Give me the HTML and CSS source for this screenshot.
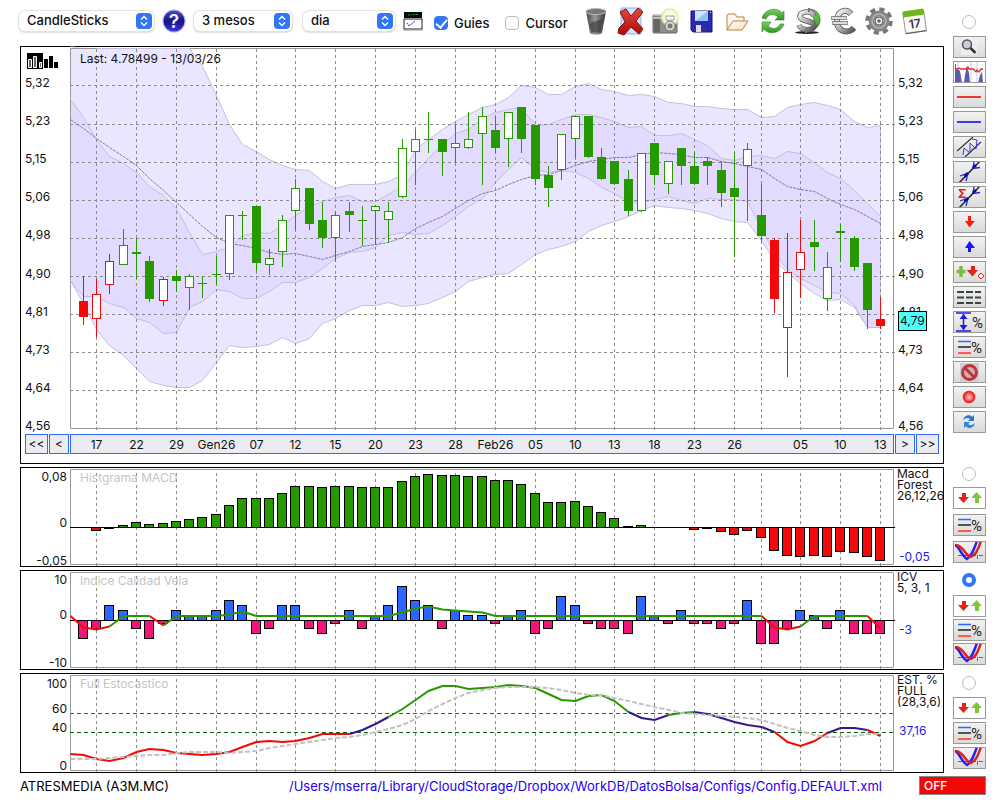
FILE: index.html
```html
<!DOCTYPE html>
<html lang="ca">
<head>
<meta charset="utf-8">
<meta name="viewport" content="width=device-width, initial-scale=1">
<title>ATRESMEDIA (A3M.MC)</title>
<link rel="stylesheet" href="styles.css">
</head>
<body>
<svg class="defs" width="0" height="0" aria-hidden="true">
  <defs>
    <linearGradient id="gMetal" x1="0" x2="1"><stop offset="0" stop-color="#444"/><stop offset=".45" stop-color="#999"/><stop offset="1" stop-color="#333"/></linearGradient>
    <linearGradient id="gSilver" x1="0" x2="1" y1="0" y2="1"><stop offset="0" stop-color="#f6f6f6"/><stop offset=".5" stop-color="#b5b2b2"/><stop offset="1" stop-color="#555"/></linearGradient>
    <linearGradient id="gRed" x1="0" x2="0" y1="0" y2="1"><stop offset="0" stop-color="#e8463c"/><stop offset="1" stop-color="#a80c0c"/></linearGradient>
    <linearGradient id="gGreen" x1="0" x2="0" y1="0" y2="1"><stop offset="0" stop-color="#7ed05c"/><stop offset="1" stop-color="#2f9427"/></linearGradient>
    <linearGradient id="gHelp" x1="0" x2="0" y1="0" y2="1"><stop offset="0" stop-color="#4a4ac4"/><stop offset=".5" stop-color="#15157e"/><stop offset="1" stop-color="#3b32e0"/></linearGradient>
    <linearGradient id="gFolder" x1="0" x2="1" y1="0" y2="1"><stop offset="0" stop-color="#fff"/><stop offset="1" stop-color="#f7dcae"/></linearGradient>
    <radialGradient id="gFlash"><stop offset="0" stop-color="#fff"/><stop offset=".6" stop-color="#fbfbe0"/><stop offset=".8" stop-color="#e9e9a8"/><stop offset="1" stop-color="#f4f4c8" stop-opacity="0"/></radialGradient>
    <radialGradient id="gDot"><stop offset="0" stop-color="#ffd0d0"/><stop offset="1" stop-color="#f22"/></radialGradient>
    <symbol id="i-updown" viewBox="0 0 33 22">
      <path d="M9 6h4v4h3l-5.500 6L5 10h4z" fill="#e3241c"/><path d="M22 16h4v-5h3l-5.500-6L18 11h4z" fill="#7fc43a"/>
    </symbol>
    <symbol id="i-levels" viewBox="0 0 33 22">
      <path d="M5 5.500h13" stroke="#2f63ff" stroke-width="1.500"/><path d="M5 11h13" stroke="#222" stroke-width="1.500"/><path d="M5 17h13" stroke="#ff5a4a" stroke-width="2"/>
      <text class="percent" x="18" y="17">%</text>
    </symbol>
    <symbol id="i-cross" viewBox="0 0 33 22">
      <path d="M5 14.500h27M24.500 14v6" stroke="#3a8a2c" stroke-dasharray="4 3"/>
      <path d="M2 4c4 1 6 10 12 14 5-3 7-10 10-18" fill="none" stroke="#2424f0" stroke-width="2.500"/>
      <path d="M3 4c6 0 9 9 14 12 6-1 8-8 11-16" fill="none" stroke="#e02020" stroke-width="2.500"/>
    </symbol>
    <symbol id="i-trend" viewBox="0 0 33 22">
      <path d="M6 22L27 0" stroke="#222" stroke-width="1.500"/>
      <path d="M7 15l8-3-2 8M21 1l-1 6.500 7-1" fill="none" stroke="#2222e8" stroke-width="1.300"/>
      <path d="M11.500 15.500L15 12M20 7l3-3" stroke="#11118c" stroke-width="2.500"/>
    </symbol>
  </defs>
</svg>

<div class="app">
  <header class="toolbar">
    <div class="selects">
      <span class="pick pick-type"><select aria-label="Tipus de gràfic"><option>CandleSticks</option></select><svg viewBox="0 0 16 16" aria-hidden="true"><path d="M5 6.500L8 3.500l3 3M5 9.500l3 3 3-3"/></svg></span>
      <button class="icon help" type="button" aria-label="Ajuda"><svg viewBox="0 0 24 24"><circle cx="12" cy="12" r="11.500" fill="#b0b0ec"/><circle cx="12" cy="12" r="10.500" fill="url(#gHelp)"/><text x="12" y="19" text-anchor="middle" font-size="19" font-weight="600" fill="#f4f4ff">?</text></svg></button>
      <span class="pick pick-range"><select aria-label="Període"><option>3 mesos</option></select><svg viewBox="0 0 16 16" aria-hidden="true"><path d="M5 6.500L8 3.500l3 3M5 9.500l3 3 3-3"/></svg></span>
      <span class="pick pick-step"><select aria-label="Interval"><option>dia</option></select><svg viewBox="0 0 16 16" aria-hidden="true"><path d="M5 6.500L8 3.500l3 3M5 9.500l3 3 3-3"/></svg></span>
      <button class="icon panels" type="button" aria-label="Panells"><svg viewBox="0 0 20 20"><rect x="1" y="1" width="18" height="6" fill="#0a0a0a"/><path d="M5 4h4M10 3.500h5" stroke="#1f9c1f" stroke-dasharray="2 1"/><rect x="1" y="8" width="18" height="10" fill="#fff" stroke="#222"/><path d="M0 19.500h20" stroke="#ccc"/><path d="M4 12l2 3 6-5" fill="none" stroke="#2a2ae0" stroke-dasharray="2 .5"/></svg></button>
    </div>
    <div class="checks">
      <label><input type="checkbox" checked>Guies</label>
      <label><input type="checkbox">Cursor</label>
    </div>
    <div class="actions">
      <button class="icon" type="button" aria-label="Paperera"><svg viewBox="0 0 28 28"><path d="M4 4l4 22c3 2 9 2 12 0l4-22z" fill="url(#gMetal)"/><ellipse cx="14" cy="4.500" rx="10" ry="3" fill="#777" stroke="#bbb"/><path d="M8 18c2-6 9-2 12-7l-1 13c-3 2-7 2-10 0z" fill="#333" opacity=".6"/></svg></button>
      <button class="icon" type="button" aria-label="Esborra"><svg viewBox="0 0 28 28"><path d="M4 1h20v26H4z" fill="#cfe2fb" stroke="#8fb4ea"/><path d="M3 5l6-3 5 7 7-8 5 4-7 9 7 8-4 5-8-7-7 8-6-2 1-5 6-6z" fill="url(#gRed)" stroke="#8c0d0d"/></svg></button>
      <button class="icon" type="button" aria-label="Captura"><svg viewBox="0 0 28 28"><rect x="1" y="8" width="24" height="18" rx="1" fill="#8d8d85" stroke="#666"/><path d="M2 8h7V6h6v2M1 11h24" stroke="#eee" fill="#aaa"/><rect x="2" y="12" width="6" height="13" fill="#666"/><circle cx="18" cy="10" r="10" fill="url(#gFlash)"/><rect x="14" y="9" width="8" height="4" fill="#fff" stroke="#999"/><circle cx="18" cy="19" r="5" fill="#d8d8cc" stroke="#777"/><circle cx="18" cy="19" r="2.500" fill="#777"/></svg></button>
      <button class="icon" type="button" aria-label="Desa"><svg viewBox="0 0 28 28"><path d="M3 4h21v21H5l-2-2z" fill="#2929b4" stroke="#15157a"/><path d="M7 4h13v10H7z" fill="#cde4f8"/><path d="M20 4l-13 10h13z" fill="#8fc3ee"/><path d="M8 18h11v7H8z" fill="#ddd"/><path d="M13 18h6v7h-6z" fill="#2e2e9a"/><path d="M22 5h1v1h-1z" fill="#fff"/></svg></button>
      <button class="icon" type="button" aria-label="Obre"><svg viewBox="0 0 28 28"><path d="M4 23V8l2-1h6l2 3h7v4" fill="#fff8ea" stroke="#b58345"/><path d="M4 23l6-9h15l-6 9z" fill="url(#gFolder)" stroke="#b58345"/></svg></button>
      <button class="icon" type="button" aria-label="Actualitza"><svg viewBox="0 0 28 28"><path d="M3 11C6 1 19 0 23 6l2-2v9h-9l3-3C15 6 9 7 7 12z" fill="url(#gGreen)" stroke="#37902c" stroke-width=".7"/><path d="M25 17C22 27 9 28 5 22l-2 3v-10h9l-3 4c4 4 10 3 12-2z" fill="url(#gGreen)" stroke="#37902c" stroke-width=".7"/></svg></button>
      <button class="icon" type="button" aria-label="Dòlar"><svg viewBox="0 0 28 28"><ellipse cx="13" cy="25.500" rx="12" ry="1.500" fill="#222"/><path d="M11 4c8-5 16 2 15 10s-9 11-14 9c5-2 8-5 8-9s-3-8-9-10z" fill="url(#gGreen)" stroke="#2a6a26" stroke-width=".7"/><path d="M20 9c-2-6-14-5-14 0 0 6 14 4 14 10 0 5-13 5-15-1" fill="none" stroke="#5a5a5a" stroke-width="5.500"/><path d="M20 9c-2-6-14-5-14 0 0 6 14 4 14 10 0 5-13 5-15-1" fill="none" stroke="url(#gSilver)" stroke-width="4"/><path d="M15 1v4M12 22v4" stroke="#777" stroke-width="2"/></svg></button>
      <button class="icon" type="button" aria-label="Euro"><svg viewBox="0 0 28 28"><path d="M22 7C17 1 8 4 8 14c0 11 11 13 17 7" fill="none" stroke="#555" stroke-width="6"/><path d="M22 7C17 1 8 4 8 14c0 11 11 13 17 7" fill="none" stroke="url(#gSilver)" stroke-width="4.500"/><path d="M2 11h16M3 16h16" stroke="#666" stroke-width="3.500"/><path d="M2.500 11h15M3.500 16h15" stroke="#ddd" stroke-width="2"/></svg></button>
      <button class="icon" type="button" aria-label="Configuració"><svg viewBox="0 0 28 28"><circle cx="14" cy="14" r="11.500" fill="none" stroke="#777" stroke-width="4.500" stroke-dasharray="5 4.030"/><circle cx="14" cy="14" r="7.500" fill="none" stroke="#858585" stroke-width="6"/><circle cx="14" cy="14" r="7" fill="none" stroke="#b4b4b4" stroke-width="1.500"/><circle cx="14" cy="14" r="4" fill="#eee" stroke="#555"/><circle cx="14" cy="14" r="1.800" fill="#666"/></svg></button>
      <button class="icon" type="button" aria-label="Calendari"><svg viewBox="0 0 28 28"><g transform="rotate(-8 14 14)"><rect x="4" y="5" width="21" height="20" fill="#fafafa" stroke="#999"/><path d="M4 3h21v6H4z" fill="#6cb818"/><path d="M4 25.500h21" stroke="#555"/><text x="14.500" y="21" text-anchor="middle" font-size="12" font-weight="600" fill="#333">17</text></g></svg></button>
    </div>
  </header>

  <aside class="tools tools-main">
    <input type="radio" name="panel" aria-label="Panell de preus">
    <button class="tool" type="button" aria-label="Lupa"><svg viewBox="0 0 33 22"><path d="M8 2h16v17H8z" fill="#eee"/><circle cx="14" cy="8.500" r="4.500" fill="#ccd" stroke="#555" stroke-width="1.500"/><path d="M17.500 12l5 5" stroke="#333" stroke-width="2.500"/></svg></button>
    <button class="tool flat" type="button" aria-label="Volum"><svg viewBox="0 0 33 22"><path d="M5 0v22M18 0v22M24 0v22" stroke="#c9c9ee"/><path d="M2 22V3h1v6l2-1 2 2 2 12zM11 22l1-8 2-9 2 7 1 10zM25 22l2-8 2-3 1 11z" fill="#5a5ab0"/><path d="M2 7l2 1 2-1 2 1h5l2-2 1 2h4l3 3 1-2 2 2 2-3h2" fill="none" stroke="#e02828" stroke-width="1.300"/></svg></button>
    <button class="tool" type="button" aria-label="Línia vermella"><svg viewBox="0 0 33 22"><path d="M4 11h24" stroke="#e83a3a" stroke-width="2"/></svg></button>
    <button class="tool" type="button" aria-label="Línia blava"><svg viewBox="0 0 33 22"><path d="M4 11h24" stroke="#3a3af4" stroke-width="2"/></svg></button>
    <button class="tool" type="button" aria-label="Canal"><svg viewBox="0 0 33 22"><path d="M4 15L20 1M12 21L28 6" stroke="#333" stroke-width="1.200"/><path d="M10 19l1-7 6 5 0-10 6 6 1-9-5-1" fill="none" stroke="#3a3ae8"/></svg></button>
    <button class="tool" type="button" aria-label="Tendència"><svg viewBox="0 0 33 22"><use href="#i-trend"/></svg></button>
    <button class="tool" type="button" aria-label="Suma de tendència"><svg viewBox="0 0 33 22"><use href="#i-trend"/><text x="5" y="12" font-size="12" font-weight="700" fill="#d22">Σ</text></svg></button>
    <button class="tool" type="button" aria-label="Venda"><svg viewBox="0 0 33 22"><path d="M15 5h3v5h4l-5.500 6.500L12 10h3z" fill="#fb1d0a"/></svg></button>
    <button class="tool" type="button" aria-label="Compra"><svg viewBox="0 0 33 22"><path d="M15 16h3v-4h4l-5.500-7L12 12h3z" fill="#1c14fb"/></svg></button>
    <button class="tool" type="button" aria-label="Afegeix senyal"><svg viewBox="0 0 33 22"><path d="M8 5v11M3.500 10.500h9" stroke="#7cbd48" stroke-width="3.500"/><path d="M18 5h4v4h3l-5.500 6.500L13.500 9H18z" fill="#e3241c"/><path d="M28 12l3 3-3 3-3-3z" fill="#fff" stroke="#e3241c"/></svg></button>
    <button class="tool" type="button" aria-label="Reixa"><svg viewBox="0 0 33 22"><path d="M4 6h24M4 11.500h24M4 17h24" stroke="#3c4440" stroke-width="2" stroke-dasharray="7 2"/></svg></button>
    <button class="tool" type="button" aria-label="Distància"><svg viewBox="0 0 33 22"><path d="M3 2h15M3 20h15M10.500 3v16" stroke="#2118e8" stroke-width="1.500"/><path d="M6.500 8l4-5 4 5M6.500 14l4 5 4-5" fill="#2118e8"/><text class="percent" x="19" y="17">%</text></svg></button>
    <button class="tool" type="button" aria-label="Nivells"><svg viewBox="0 0 33 22"><use href="#i-levels"/></svg></button>
    <button class="tool" type="button" aria-label="Anul·la"><svg viewBox="0 0 33 22"><path d="M7 2h19v19H7z" fill="#cfcfda"/><circle cx="16.500" cy="11.500" r="7" fill="#d9aaae" stroke="#b8383c" stroke-width="3"/><path d="M12 7l9 9" stroke="#b8383c" stroke-width="3"/></svg></button>
    <button class="tool" type="button" aria-label="Grava"><svg viewBox="0 0 33 22"><circle cx="16" cy="11" r="5.500" fill="url(#gDot)" stroke="#ee2222" stroke-width="1.500"/></svg></button>
    <button class="tool" type="button" aria-label="Recarrega"><svg viewBox="0 0 33 22"><path d="M10 9c1-5 7-6 9-3l2-2v6h-6l2-2c-2-2-5-1-7 1z" fill="#2876cc"/><path d="M22 12c-1 5-7 7-9 3l-2 2v-6h6l-2 2c2 2 5 1 7-1z" fill="#2f86dd"/></svg></button>
  </aside>

  <section class="panel price">
    <div class="scale scale-left">
      <svg class="bars-icon" viewBox="0 0 32 16" aria-hidden="true"><rect width="16" height="16"/><path d="M1.500 6.500h3v8h-3zM6.500 3.500h3v11h-3zM12.500 9.500h2v5h-2z" fill="#666" stroke="#fff"/><path d="M17 6h4v9h-4zM22 3h4v12h-4zM27 9h4v6h-4z"/></svg>
      <div class="scale-labels"><span>5,32</span><span>5,23</span><span>5,15</span><span>5,06</span><span>4,98</span><span>4,90</span><span>4,81</span><span>4,73</span><span>4,64</span><span>4,56</span></div>
    </div>
    <div class="plot">
      <svg id="price-plot" viewBox="70 47 824 387" preserveAspectRatio="none" aria-label="Preus"></svg>
      <p class="caption last">Last: 4.78499 - 13/03/26</p>
    </div>
    <div class="scale scale-right">
      <div class="scale-labels"><span>5,32</span><span>5,23</span><span>5,15</span><span>5,06</span><span>4,98</span><span>4,90</span><span>4,81</span><span>4,73</span><span>4,64</span><span>4,56</span></div>
      <output class="price-tag">4,79</output>
    </div>
    <div class="nav nav-prev"><button class="wide" type="button">&lt;&lt;</button><button type="button">&lt;</button></div>
    <div class="dates"><svg id="dates" aria-label="Dates"></svg></div>
    <div class="nav nav-next"><button type="button">&gt;</button><button class="wide" type="button">&gt;&gt;</button></div>
  </section>

  <section class="panel study macd">
    <div class="ticks"><span>0,08</span><span>0</span><span>-0,05</span></div>
    <div class="plot"><svg id="macd-plot" viewBox="70 468 824 98" preserveAspectRatio="none" aria-label="MACD"></svg><p class="caption">Histgrama MACD</p></div>
    <div class="legend"><span>Macd</span><span>Forest</span><span>26,12,26</span><output>-0,05</output></div>
  </section>
  <aside class="tools loose">
    <input type="radio" name="panel" aria-label="Panell MACD">
    <button class="tool white" type="button" aria-label="Ordena"><svg viewBox="0 0 33 22"><use href="#i-updown"/></svg></button>
    <button class="tool" type="button" aria-label="Nivells"><svg viewBox="0 0 33 22"><use href="#i-levels"/></svg></button>
    <button class="tool" type="button" aria-label="Creuaments"><svg viewBox="0 0 33 22"><use href="#i-cross"/></svg></button>
  </aside>

  <section class="panel study icv">
    <div class="ticks"><span>10</span><span>0</span><span>-10</span></div>
    <div class="plot"><svg id="icv-plot" viewBox="70 571 824 98" preserveAspectRatio="none" aria-label="ICV"></svg><p class="caption">Indice Calidad Vela</p></div>
    <div class="legend"><span>ICV</span><span>5, 3, 1</span><output>-3</output></div>
  </section>
  <aside class="tools tight">
    <input type="radio" name="panel" aria-label="Panell ICV" checked>
    <button class="tool white" type="button" aria-label="Ordena"><svg viewBox="0 0 33 22"><use href="#i-updown"/></svg></button>
    <button class="tool" type="button" aria-label="Nivells"><svg viewBox="0 0 33 22"><use href="#i-levels"/></svg></button>
    <button class="tool" type="button" aria-label="Creuaments"><svg viewBox="0 0 33 22"><use href="#i-cross"/></svg></button>
  </aside>

  <section class="panel study stoch">
    <div class="ticks"><span>100</span><span>60</span><span>40</span><span>0</span></div>
    <div class="plot"><svg id="stoch-plot" viewBox="70 674 824 98" preserveAspectRatio="none" aria-label="Estocàstic"></svg><p class="caption">Full Estocastico</p></div>
    <div class="legend"><span>EST. %</span><span>FULL</span><span>(28,3,6)</span><output>37,16</output></div>
  </section>
  <aside class="tools">
    <input type="radio" name="panel" aria-label="Panell estocàstic">
    <button class="tool white" type="button" aria-label="Ordena"><svg viewBox="0 0 33 22"><use href="#i-updown"/></svg></button>
    <button class="tool" type="button" aria-label="Nivells"><svg viewBox="0 0 33 22"><use href="#i-levels"/></svg></button>
    <button class="tool" type="button" aria-label="Creuaments"><svg viewBox="0 0 33 22"><use href="#i-cross"/></svg></button>
  </aside>

  <footer class="status">
    <span class="name">ATRESMEDIA (A3M.MC)</span>
    <span class="config">/Users/mserra/Library/CloudStorage/Dropbox/WorkDB/DatosBolsa/Configs/Config.DEFAULT.xml</span>
    <button class="off" type="button">OFF</button>
  </footer>
</div>
<script src="charts.js"></script>
</body>
</html>
```

FILE: styles.css
```css
* { box-sizing: border-box; }
body { margin: 0; background: #fff; color: #111; font: 12px/16px Inter, "Liberation Sans", sans-serif; }
button, select, input { font: inherit; color: inherit; margin: 0; }
svg { display: block; overflow: visible; }
svg text { font-family: Inter, "Liberation Sans", sans-serif; }
.defs { position: absolute; }

.app {
  display: grid;
  grid-template-columns: minmax(0, 1fr) 33px;
  grid-template-rows: 46px auto auto auto auto auto;
  column-gap: 9px;
  padding: 0 14px 0 20px;
}

/* toolbar */
.toolbar { display: flex; align-items: center; margin-left: -1px; padding: 0 16px 4px 0; font-size: 13px; font-weight: 500; }
.selects, .checks { display: flex; align-items: center; flex: none; }
.selects { gap: 8px; }
.pick { position: relative; display: block; }
.pick select { appearance: none; width: 100%; height: 20px; padding: 0 24px 2px 8px; border: 0; border-radius: 6px; background: #fff; box-shadow: 0 0 0 1px #e2e2e2, 0 1px 2px #999; line-height: 18px; }
.pick svg { position: absolute; right: 2px; top: 2px; width: 16px; height: 16px; border-radius: 4px; background: #2f76fb; fill: none; stroke: #fff; stroke-width: 1.5; pointer-events: none; }
.pick-type { width: 135px; }
.pick-range { width: 98px; }
.pick-step { width: 92px; margin-left: 3px; }
.icon { display: block; width: 28px; padding: 0; border: 0; background: none; }
.icon.help { width: 24px; }
.icon.panels { width: 20px; }
.checks { gap: 16px; margin-left: 11px; }
.checks label { display: flex; align-items: center; gap: 6px; padding-top: 3px; }
.checks input { appearance: none; width: 14px; height: 14px; border: 1px solid #bbb; border-radius: 4px; background: #fff; }
.checks input:checked { border-color: #2f76fb; background: #2f76fb; display: grid; place-items: center; }
.checks input:checked::after { content: ""; width: 5px; height: 9px; margin-bottom: 2px; border: solid #fff; border-width: 0 2px 2px 0; transform: rotate(40deg); }
.actions { display: flex; justify-content: space-between; flex: 1; margin-left: 14px; }

/* tool columns */
.tools { display: flex; flex-direction: column; align-items: center; gap: 3px; padding-top: 3px; }
.tools-main { grid-column: 2; grid-row: 1 / 3; padding-top: 15px; }
.tools.loose { gap: 5px; padding-top: 0; }
.tools.tight { gap: 2px; }
.tools input { appearance: none; flex: none; width: 14px; height: 14px; margin: 0 2px 4px 0; border: 1px solid #bbb; border-radius: 50%; background: #fff; }
.tools.loose input { margin-bottom: 1px; }
.tools.tight input { margin-bottom: 6px; }
.tools input:checked { border: 4px solid #2f76fb; }
.tool { flex: none; width: 33px; height: 22px; padding: 0; border: 1px solid #999; background: linear-gradient(#f2f2f2, #dadada); overflow: hidden; }
.tool svg { width: 33px; height: 22px; margin: -1px; }
.tool.white, .tool.flat { background: #fff; }
.percent { font: 15px Roboto, "Liberation Sans", sans-serif; fill: #222; }

/* panels */
.panel { grid-column: 1; display: grid; grid-template-columns: 49px minmax(0, 1fr) 49px; border: 1px solid #000; margin-bottom: 3px; }
.price { grid-template-rows: 387px 20px; padding-bottom: 9px; }
.study { height: 100px; }
.plot { position: relative; }
.plot > svg { width: 100%; height: 100%; }
.caption { position: absolute; left: 10px; top: 2px; margin: 0; color: #c4c4c4; }
.caption.last { color: #111; top: 4px; }

.scale { position: relative; display: flex; flex-direction: column; padding: 28px 0 1px 4px; }
.scale-left { padding-top: 6px; }
.bars-icon { width: 32px; height: 16px; margin: 0 0 6px 2px; }
.scale-labels { display: flex; flex-direction: column; justify-content: space-between; flex: 1; line-height: 15px; }
.price-tag { position: absolute; left: 4px; top: 264px; padding: 0 1px; border: 1px solid #000; background: #4dffff; line-height: 18px; }

.nav { display: flex; gap: 1px; padding-left: 4px; }
.nav-next { padding-left: 1px; }
.nav button, .dates { height: 20px; border: 1px solid #2f6bff; background: #ebebf2; }
.nav button { width: 20px; padding: 0; }
.nav .wide { width: 23px; }
.dates svg { width: 100%; height: 18px; }
.dates text { font-size: 12px; text-anchor: middle; fill: #111; }

.ticks { display: grid; justify-items: end; align-content: start; padding: 1px 3px 0 0; height: 98px; }
.macd .ticks { grid-template-rows: 46px 38px 14px; }
.icv .ticks { grid-template-rows: 35px 48px 14px; }
.stoch .ticks { grid-template-rows: 25px 19px 38px 14px; padding-top: 2px; }
.legend { display: flex; flex-direction: column; padding: 0 0 0 3px; line-height: 11px; white-space: nowrap; overflow: hidden; }
.legend output { padding-left: 2px; color: #1a1aee; line-height: 16px; }
.macd output { margin-top: 48px; }
.icv output { margin-top: 29px; }
.stoch output { margin-top: 16px; }

/* status line */
.status { grid-column: 1 / 3; display: flex; align-items: center; font-size: 13px; color: #000; white-space: nowrap; }
.config { margin-left: auto; margin-right: 37px; color: #2200ee; }
.off { width: 67px; height: 19px; padding: 0 4px; border: 1px solid #888; background: #f30808; color: #fff; text-align: left; line-height: 16px; font-size: 12px; font-weight: 500; }

/* chart strokes */
.axis { fill: none; stroke: #999; }
.grid { stroke: #8c8c8c; stroke-dasharray: 3 3; }
.band-outer { fill: #ebe6ff; }
.band-inner { fill: #e2daff; }
.band-line { fill: none; stroke: #c5bfe0; }
.mean { fill: none; stroke: #857c96; stroke-dasharray: 3 1; }
.up { stroke: #279900; fill: #279900; }
.down { stroke: #f20a0a; fill: #f20a0a; }
.hollow { fill: #fff; }
.bar { stroke: #000; }
.bar-up { fill: #279900; }
.bar-down { fill: #f20a0a; }
.bar-blue { fill: #2a66ff; }
.bar-pink { fill: #f2147a; }
.zero { stroke: #000; }
.line { fill: none; stroke-width: 2; }
.line-red { stroke: #f20a0a; }
.line-green { stroke: #279900; }
.line-navy { stroke: #331a8c; }
.signal { fill: none; stroke: #c2c2c2; stroke-width: 2; stroke-dasharray: 5 2; }
.level-high { stroke: #f20a0a; stroke-dasharray: 4 3; }
.level-low { stroke: #0a660a; stroke-dasharray: 4 3; }
```

FILE: charts.js
```js
// Horizontal position of session i
const X = i => Math.floor(70.12 + 13.2865 * i);
const marks = [2, 5, 8, 11, 14, 17, 20, 23, 26, 29, 32, 35, 38, 41, 44, 47, 50, 52, 55, 58, 61];
const names = ['17', '22', '29', 'Gen26', '07', '12', '15', '20', '23', '28', 'Feb26', '05', '10', '13', '18', '23', '26', '', '05', '10', '13'];

const line = (x1, y1, x2, y2, c) => `<line x1="${x1}" y1="${y1}" x2="${x2}" y2="${y2}" class="${c}"/>`;
const pts = (ys, from = 0) => ys.map((y, i) => `${X(i + from) + .5},${y + .5}`);
const poly = (ys, c, from = 0) => `<polyline points="${pts(ys, from).join(' ')}" class="${c}"/>`;
const area = (a, b, c) => `<polygon points="${pts(a).concat(pts(b).reverse()).join(' ')}" class="${c}"/>`;
const columns = (top, bottom) => marks.map(i => line(X(i) + .5, top, X(i) + .5, bottom, 'grid')).join('');
const frame = (top, bottom) => `<path d="M70.5 ${bottom}.5V${top}.5H893.5V${bottom}.5z" class="axis"/>`;
const draw = (id, html) => { document.getElementById(id).innerHTML = html; };

// Price bands
const outerTop = [46, 47, 48, 48, 48, 48, 48, 48, 48, 48, 66, 95, 124, 144, 151, 159, 165, 169, 170, 181, 188, 184, 184, 184, 181, 174, 149, 139, 129, 121, 114, 107, 104, 97, 85, 87, 94, 94, 86, 83, 89, 91, 95, 94, 96, 102, 103, 106, 106, 108, 109, 109, 117, 116, 107, 104, 102, 105, 109, 121, 127, 125];
const outerLow = [280, 303, 329, 345, 355, 368, 381, 385, 387, 387, 380, 362, 345, 347, 346, 344, 337, 343, 338, 323, 318, 310, 305, 305, 302, 306, 305, 303, 297, 291, 281, 277, 274, 273, 264, 254, 249, 246, 241, 231, 225, 221, 216, 210, 205, 207, 208, 210, 213, 218, 221, 222, 240, 260, 272, 283, 293, 300, 299, 307, 327, 327];
const innerTop = [99, 117, 139, 156, 163, 172, 186, 195, 208, 232, 254, 251, 247, 235, 232, 233, 225, 215, 206, 201, 197, 195, 201, 201, 194, 186, 172, 158, 144, 133, 129, 118, 112, 109, 107, 125, 124, 119, 114, 114, 117, 121, 127, 126, 135, 135, 133, 139, 145, 158, 160, 156, 155, 158, 151, 153, 162, 172, 178, 190, 203, 216];
const innerLow = [280, 296, 296, 303, 307, 318, 322, 333, 332, 307, 301, 289, 291, 298, 298, 291, 282, 282, 277, 268, 258, 252, 251, 247, 235, 232, 234, 233, 225, 216, 206, 198, 182, 169, 157, 169, 172, 170, 172, 178, 187, 193, 201, 202, 199, 196, 200, 203, 198, 199, 199, 201, 228, 253, 269, 278, 285, 292, 293, 305, 327, 327];
const mean = [119, 128, 138, 147, 156, 165, 178, 190, 202, 214, 226, 237, 243, 245, 248, 252, 254, 253, 256, 259, 255, 251, 246, 244, 242, 237, 228, 222, 216, 208, 200, 193, 190, 184, 179, 175, 174, 170, 165, 161, 159, 157, 157, 154, 152, 153, 154, 157, 157, 161, 163, 166, 169, 178, 186, 189, 191, 198, 204, 209, 216, 223];

// Sessions: [kind, high, body top, body bottom, low]; upper case is a filled body
const candles = [
  ['R', 276, 301, 316, 325], ['r', 279, 294, 318, 337], ['r', 254, 261, 284, 294], ['g', 229, 245, 264, 265],
  ['G', 238, 252, 253, 279], ['G', 256, 261, 298, 302], ['r', 277, 279, 300, 306], ['G', 270, 276, 280, 292],
  ['g', 274, 276, 287, 310], ['G', 276, 283, 283, 298], ['G', 256, 274, 274, 285], ['g', 215, 215, 273, 280],
  ['G', 211, 215, 215, 240], ['G', 206, 206, 262, 271], ['g', 249, 258, 264, 275], ['g', 215, 220, 251, 267],
  ['g', 179, 188, 210, 230], ['G', 188, 188, 223, 230], ['G', 202, 220, 237, 248], ['g', 211, 215, 237, 262],
  ['G', 202, 211, 214, 232], ['G', 206, 220, 220, 246], ['g', 205, 206, 210, 245], ['g', 202, 211, 219, 243],
  ['g', 139, 148, 196, 198], ['g', 130, 139, 151, 185], ['G', 112, 139, 139, 153], ['G', 139, 139, 151, 176],
  ['g', 125, 143, 147, 162], ['g', 112, 139, 147, 149], ['g', 107, 116, 133, 185], ['G', 116, 130, 147, 153],
  ['g', 112, 112, 138, 167], ['G', 107, 107, 138, 153], ['G', 125, 125, 178, 185], ['G', 166, 175, 187, 207],
  ['g', 134, 134, 169, 180], ['g', 116, 116, 138, 158], ['G', 116, 116, 156, 158], ['G', 148, 157, 178, 180],
  ['G', 161, 161, 183, 185], ['G', 170, 179, 210, 216], ['g', 153, 153, 210, 212], ['G', 143, 143, 174, 185],
  ['g', 161, 161, 183, 194], ['G', 148, 148, 165, 185], ['G', 152, 166, 183, 185], ['G', 157, 161, 165, 185],
  ['G', 161, 170, 192, 207], ['G', 152, 188, 196, 257], ['g', 143, 149, 165, 221], ['G', 184, 215, 235, 241],
  ['R', 238, 240, 298, 313], ['r', 233, 272, 327, 377], ['r', 220, 252, 269, 298], ['G', 220, 242, 246, 271],
  ['g', 252, 267, 298, 311], ['G', 224, 231, 232, 262], ['G', 236, 238, 266, 271], ['G', 263, 263, 309, 329],
  ['R', 297, 319, 325, 329]
];
const candle = ([kind, high, top, bottom, low], n) => {
  const x = X(n + 1), dir = kind.toLowerCase() === 'g' ? 'up' : 'down';
  const hollow = kind === kind.toLowerCase() ? ' hollow' : '';
  const body = top === bottom
    ? line(x - 4, top + .5, x + 5, top + .5, dir)
    : `<rect x="${x - 3.5}" y="${top + .5}" width="8" height="${bottom - top}" class="${dir}${hollow}"/>`;
  return line(x + .5, high, x + .5, low, dir) + body;
};
const rows = [85, 124, 162, 200, 238, 276, 314, 352, 390];
draw('price-plot',
  area(outerTop, outerLow, 'band-outer') + area(innerTop, innerLow, 'band-inner') +
  frame(48, 428) +
  poly(outerTop.slice(2), 'band-line', 2) + poly(outerLow, 'band-line') + poly(innerTop, 'band-line') + poly(innerLow, 'band-line') +
  line(880.5, 125, 880.5, 327, 'band-line') +
  rows.map(y => line(70, y + .5, 895, y + .5, 'grid')).join('') + columns(49, 430) +
  poly(mean, 'mean') + candles.map(candle).join(''));

draw('dates', marks.map((i, n) => `<text x="${((X(i) - 70.5) / 822 * 100).toFixed(2)}%" y="14">${names[n]}</text>`).join(''));

// Histogram values: level of each bar end, 0 for no bar
const bars = (levels, zero, up, down) => levels.map((y, i) => {
  if (!y) return '';
  const top = Math.min(y, zero), h = Math.abs(zero - y);
  return `<rect x="${X(i) - 4.5}" y="${top + .5}" width="9" height="${h}" class="bar ${y < zero ? up : down}"/>`;
}).join('');

const macd = [0, 0, 530, 528, 525, 522, 524, 523, 521, 519, 517, 514, 505, 498, 498, 498, 493, 486, 486, 487, 486, 486, 487, 487, 487, 481, 476, 474, 475, 475, 476, 476, 480, 480, 484, 493, 502, 502, 501, 506, 512, 518, 526, 525, 0, 0, 0, 529, 528, 531, 534, 530, 537, 550, 555, 556, 555, 556, 551, 552, 556, 560];
draw('macd-plot', frame(469, 564) + columns(473, 566) + bars(macd, 527, 'bar-up', 'bar-down') + line(70, 527.5, 895, 527.5, 'zero'));

const icv = [0, 638, 628, 605, 610, 628, 638, 623, 610, 615, 615, 610, 600, 605, 633, 628, 605, 605, 628, 633, 623, 610, 628, 615, 605, 586, 600, 605, 628, 610, 615, 615, 623, 615, 610, 633, 628, 596, 605, 623, 628, 628, 633, 596, 615, 623, 610, 623, 623, 628, 623, 600, 643, 643, 628, 610, 615, 628, 610, 633, 633, 633];
const icvLine = Array(62).fill(615.5);
Object.assign(icvLine, { 1: 627, 2: 629, 3: 626, 7: 625, 12: 614, 13: 611, 25: 612, 26: 608, 27: 606, 28: 609, 29: 610, 30: 611, 31: 612, 53: 627, 54: 629, 55: 626, 61: 628 });
const pieces = (ys, cuts) => cuts.map(([a, b, c]) => poly(ys.slice(a, b + 1), 'line line-' + c, a)).join('');
draw('icv-plot', frame(572, 667) + columns(576, 669) + bars(icv, 620, 'bar-blue', 'bar-pink') + line(70, 620.5, 895, 620.5, 'zero') +
  pieces(icvLine, [[0, 3, 'red'], [3, 6, 'green'], [6, 7, 'red'], [7, 52, 'green'], [52, 55, 'red'], [55, 60, 'green'], [60, 61, 'red']]));

const fast = [754, 755, 759, 761, 758, 752, 749, 750, 753, 754, 755, 754, 752, 747, 742, 741, 742, 741, 738, 734, 734, 734, 730, 724, 717, 709, 700, 691, 686, 686, 689, 688, 687, 685, 686, 688, 694, 700, 701, 696, 695, 701, 712, 718, 720, 715, 713, 712, 714, 718, 722, 725, 727, 732, 742, 746, 741, 733, 728, 728, 730, 736].map(y => y - .5);
const slow = [759, 759, 759, 758, 757, 756, 755, 755, 753, 752, 752, 752, 753, 752, 751, 748, 746, 744, 742, 740, 738, 737, 735, 732, 729, 725, 719, 711, 704, 698, 693, 690, 688, 687, 687, 687, 688, 690, 693, 695, 695, 698, 701, 704, 707, 710, 713, 714, 715, 716, 717, 718, 720, 724, 728, 731, 735, 737, 737, 736, 734, 734].map(y => y - .5);
draw('stoch-plot', frame(675, 770) + columns(679, 772) +
  line(70, 713.5, 895, 713.5, 'level-high') + line(70, 732.5, 895, 732.5, 'level-low') +
  pieces(fast, [[0, 21, 'red'], [21, 24, 'navy'], [24, 42, 'green'], [42, 45, 'navy'], [45, 47, 'green'], [47, 53, 'navy'], [53, 57, 'red'], [57, 60, 'navy'], [60, 61, 'red']]) +
  poly(slow, 'signal'));
```
